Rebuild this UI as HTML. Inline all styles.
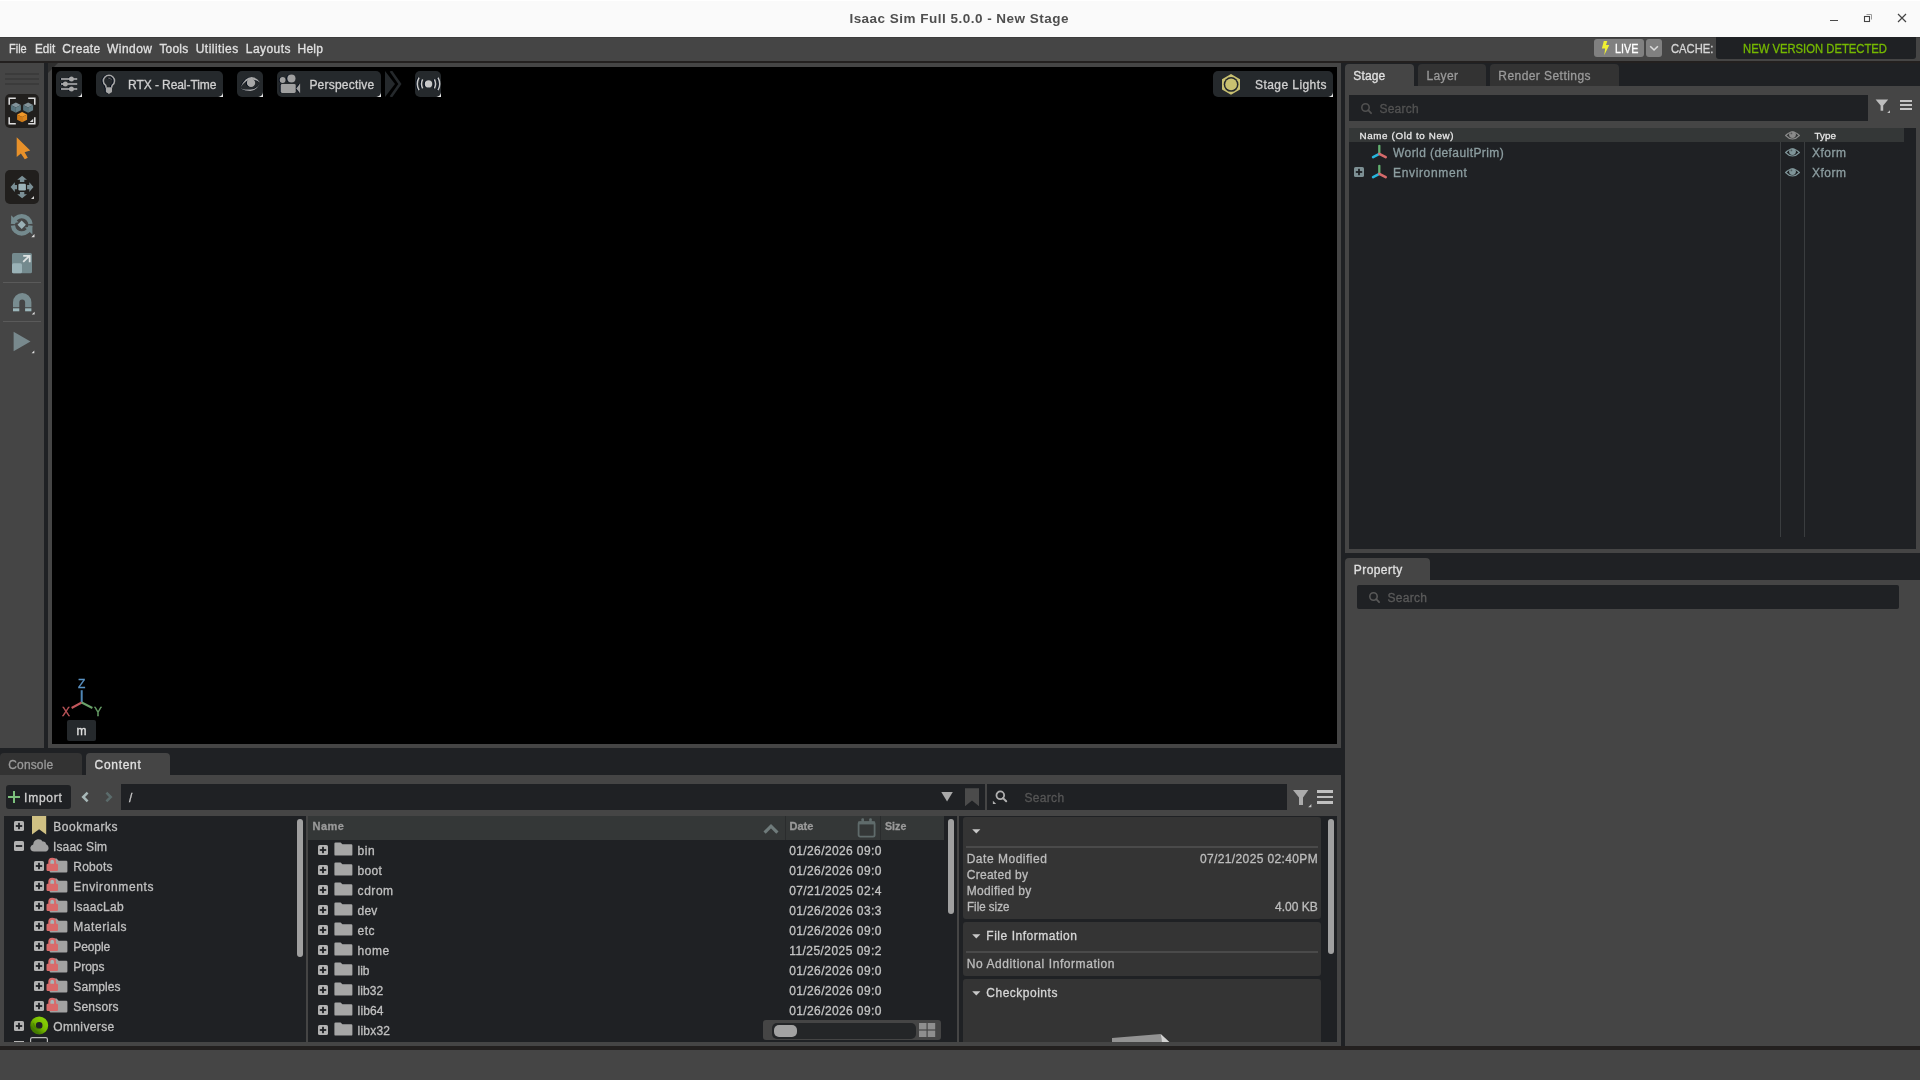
<!DOCTYPE html>
<html lang="en"><head><meta charset="utf-8"><title>Isaac Sim Full 5.0.0 - New Stage</title>
<style>
html,body{margin:0;padding:0}
body{width:1920px;height:1080px;overflow:hidden;position:relative;background:#454545;font-family:"Liberation Sans", sans-serif;}
.b{position:absolute;display:block}
.t{position:absolute;white-space:pre;line-height:1;display:block;-webkit-text-stroke:0.3px currentColor}
#root{position:absolute;left:0;top:0;width:1920px;height:1080px;will-change:transform;overflow:hidden}
</style></head>
<body>
<div id="root">
<div class="b" style="left:0px;top:0px;width:1920px;height:37px;background:#fafafa;"></div>
<div class="b" style="left:0px;top:0px;width:1920px;height:1px;background:#ffffff;"></div>
<span class="t" style="left:849.40px;top:12.37px;font-size:13.5px;color:#4f4f4f;letter-spacing:0.485px;font-weight:700;-webkit-text-stroke-width:0px;">Isaac Sim Full 5.0.0 - New Stage</span>
<div class="b" style="left:1830px;top:20px;width:8px;height:1px;background:#4a4a4a;"></div>
<svg class="b" style="left:1862px;top:12px;" width="12" height="12" viewBox="0 0 12 12"><path d="M4.5 2.5h5v5" fill="none" stroke="#9a9a9a" stroke-width="1"/><rect x="2.5" y="4.5" width="5" height="5" fill="none" stroke="#444" stroke-width="1.1"/></svg>
<svg class="b" style="left:1896px;top:12px;" width="12" height="12" viewBox="0 0 12 12"><path d="M2 2l8 8M10 2l-8 8" fill="none" stroke="#444" stroke-width="1.2"/></svg>
<div class="b" style="left:0px;top:37px;width:1920px;height:24px;background:#454545;"></div>
<div class="b" style="left:0px;top:37px;width:1920px;height:1px;background:#3b3b3b;"></div>
<div class="b" style="left:0px;top:61px;width:1920px;height:2px;background:#23201f;"></div>
<span class="t" style="left:9.40px;top:42.84px;font-size:12px;color:#e0e0e0;transform:scaleX(0.9155);transform-origin:0 0;">File</span>
<span class="t" style="left:34.50px;top:42.84px;font-size:12px;color:#e0e0e0;transform:scaleX(0.9745);transform-origin:0 0;">Edit</span>
<span class="t" style="left:62.30px;top:42.84px;font-size:12px;color:#e0e0e0;letter-spacing:0.351px;">Create</span>
<span class="t" style="left:107.10px;top:42.84px;font-size:12px;color:#e0e0e0;letter-spacing:0.437px;">Window</span>
<span class="t" style="left:159.40px;top:42.84px;font-size:12px;color:#e0e0e0;letter-spacing:0.197px;">Tools</span>
<span class="t" style="left:195.70px;top:42.84px;font-size:12px;color:#e0e0e0;letter-spacing:0.479px;">Utilities</span>
<span class="t" style="left:245.80px;top:42.84px;font-size:12px;color:#e0e0e0;letter-spacing:0.428px;">Layouts</span>
<span class="t" style="left:297.50px;top:42.84px;font-size:12px;color:#e0e0e0;letter-spacing:0.231px;">Help</span>
<div class="b" style="left:1594px;top:39px;width:50px;height:18px;background:#808080;border-radius:3px"></div>
<svg class="b" style="left:1600px;top:40px;" width="11" height="16" viewBox="0 0 11 16"><path d="M3.8 1H7.3L6 5H9.3L4.2 15.2L5.2 8.4H1.9Z" fill="#f0f032"/></svg>
<span class="t" style="left:1614.80px;top:42.84px;font-size:12px;color:#ffffff;transform:scaleX(0.8958);transform-origin:0 0;">LIVE</span>
<div class="b" style="left:1646px;top:39px;width:16px;height:18px;background:#808080;border-radius:3px"></div>
<svg class="b" style="left:1649px;top:44px;" width="10" height="8" viewBox="0 0 10 8"><path d="M1.2 2.2L5.05 6L8.9 2.2" fill="none" stroke="#dcdcdc" stroke-width="1.6"/></svg>
<span class="t" style="left:1670.70px;top:42.64px;font-size:12px;color:#d6d6d6;transform:scaleX(0.9354);transform-origin:0 0;">CACHE:</span>
<div class="b" style="left:1716px;top:37px;width:200px;height:22px;background:#1f2124;border-radius:0 0 3px 3px"></div>
<span class="t" style="left:1743.30px;top:42.64px;font-size:12px;color:#76b900;transform:scaleX(0.9390);transform-origin:0 0;">NEW VERSION DETECTED</span>
<div class="b" style="left:0px;top:63px;width:44px;height:685px;background:#454545;"></div>
<div class="b" style="left:44px;top:63px;width:4px;height:685px;background:#1f2124;"></div>
<div class="b" style="left:48px;top:63px;width:1293px;height:685px;background:#454545;"></div>
<div class="b" style="left:52px;top:67px;width:1285px;height:677px;background:#000;"></div>
<svg class="b" style="left:48px;top:63px;" width="10" height="10" viewBox="0 0 10 10"><path d="M0 0H10L0 10Z" fill="#2e2e2e"/></svg>
<div class="b" style="left:52px;top:67px;width:1285px;height:677px;background:#000;"></div>
<div class="b" style="left:1341px;top:63px;width:4px;height:983px;background:#1f2124;"></div>
<div class="b" style="left:0px;top:748px;width:1341px;height:5px;background:#1f2124;"></div>
<div class="b" style="left:0px;top:753px;width:1341px;height:22px;background:#1f2124;"></div>
<div class="b" style="left:0px;top:775px;width:1341px;height:271px;background:#454545;"></div>
<div class="b" style="left:0px;top:1046px;width:1920px;height:4px;background:#23201f;"></div>
<div class="b" style="left:0px;top:1050px;width:1920px;height:30px;background:#454545;"></div>
<div class="b" style="left:0px;top:753px;width:82px;height:22px;background:#333333;border-radius:4px 4px 0 0"></div>
<div class="b" style="left:86px;top:753px;width:84px;height:22px;background:#454545;border-radius:4px 4px 0 0"></div>
<span class="t" style="left:8.30px;top:758.84px;font-size:12px;color:#9a9a9a;letter-spacing:0.141px;">Console</span>
<span class="t" style="left:94.50px;top:758.84px;font-size:12px;color:#e0e0e0;letter-spacing:0.717px;">Content</span>
<div class="b" style="left:1345px;top:63px;width:575px;height:23px;background:#1f2124;"></div>
<div class="b" style="left:1345px;top:86px;width:575px;height:467px;background:#454545;"></div>
<div class="b" style="left:1345px;top:553px;width:575px;height:5px;background:#1f2124;"></div>
<div class="b" style="left:1345px;top:558px;width:575px;height:22px;background:#1f2124;"></div>
<div class="b" style="left:1345px;top:580px;width:575px;height:466px;background:#454545;"></div>
<div class="b" style="left:1345px;top:64px;width:69px;height:22px;background:#454545;border-radius:4px 4px 0 0"></div>
<div class="b" style="left:1418px;top:64px;width:68px;height:22px;background:#333333;border-radius:4px 4px 0 0"></div>
<div class="b" style="left:1490px;top:64px;width:129px;height:22px;background:#333333;border-radius:4px 4px 0 0"></div>
<span class="t" style="left:1353.30px;top:69.84px;font-size:12px;color:#e0e0e0;letter-spacing:0.154px;">Stage</span>
<span class="t" style="left:1426.40px;top:69.84px;font-size:12px;color:#9a9a9a;letter-spacing:0.395px;">Layer</span>
<span class="t" style="left:1498.30px;top:69.84px;font-size:12px;color:#9a9a9a;letter-spacing:0.439px;">Render Settings</span>
<div class="b" style="left:5px;top:73px;width:34px;height:2px;background:#3b3b3b;"></div>
<div class="b" style="left:5px;top:78px;width:34px;height:2px;background:#3b3b3b;"></div>
<div class="b" style="left:5px;top:83px;width:34px;height:2px;background:#3b3b3b;"></div>
<div class="b" style="left:5px;top:94px;width:34px;height:34px;background:#211f1d;border-radius:5px"></div>
<svg class="b" style="left:5px;top:94px;" width="34" height="34" viewBox="0 0 34 34"><path d="M4.2 10.8V4.2H10.8M23.2 4.2H29.8V10.8M29.8 23.2V29.8H23.2M10.8 29.8H4.2V23.2" fill="none" stroke="#dedede" stroke-width="1.5"/><path d="M10.9 8.399999999999999L15.9 11.0L10.9 13.6L5.9 11.0Z" fill="#82939a"/><path d="M5.9 11.0L10.9 13.6L10.9 18.8L5.9 16.2Z" fill="#58737c"/><path d="M15.9 11.0L10.9 13.6L10.9 18.8L15.9 16.2Z" fill="#637e86"/><path d="M23.1 8.399999999999999L28.1 11.0L23.1 13.6L18.1 11.0Z" fill="#82939a"/><path d="M18.1 11.0L23.1 13.6L23.1 18.8L18.1 16.2Z" fill="#58737c"/><path d="M28.1 11.0L23.1 13.6L23.1 18.8L28.1 16.2Z" fill="#637e86"/><path d="M17.1 17.900000000000002L22.1 20.5L17.1 23.1L12.100000000000001 20.5Z" fill="#f0982a"/><path d="M12.100000000000001 20.5L17.1 23.1L17.1 28.3L12.100000000000001 25.700000000000003Z" fill="#d07a16"/><path d="M22.1 20.5L17.1 23.1L17.1 28.3L22.1 25.700000000000003Z" fill="#dc861e"/><path d="M28.2 24.8V28H24.8Z" fill="#d8d8d8"/></svg>
<svg class="b" style="left:0px;top:132px;" width="44" height="34" viewBox="0 0 44 34"><path d="M16.7 5.2L16.7 25L20.9 21.6L24.8 27.2L27.8 25.7L24.6 20.2L30.2 18.6Z" fill="#e8912a"/></svg>
<div class="b" style="left:5px;top:170px;width:34px;height:34px;background:#211f1d;border-radius:5px"></div>
<svg class="b" style="left:5px;top:170px;" width="34" height="34" viewBox="0 0 34 34"><rect x="13.4" y="13.7" width="7.5" height="6.8" rx="1.2" fill="#9cb3b8"/><path d="M17.1 5.8L22 9.8H19.3V12H14.9V9.8H12.2Z" fill="#7b9096"/><path d="M17.1 28.2L22 24.3H19.3V22.1H14.9V24.3H12.2Z" fill="#7b9096"/><path d="M5.6 17.1L9.8 12.2V14.9H12V19.3H9.8V22Z" fill="#7b9096"/><path d="M28.5 17.1L24.3 12.2V14.9H22.1V19.3H24.3V22Z" fill="#7b9096"/><path d="M29 26V29H26Z" fill="#d8d8d8"/></svg>
<svg class="b" style="left:8px;top:210px;" width="28" height="30" viewBox="0 0 28 30"><path d="M22.5 14.0A8.85 8.85 0 0 0 4.9 14.0" fill="none" stroke="#748a8e" stroke-width="4.3"/><path d="M4.9 15.6A8.85 8.85 0 0 0 22.5 15.6" fill="none" stroke="#748a8e" stroke-width="4.3"/><path d="M3.1 5.2V13.4L10.6 12.2Z" fill="#748a8e"/><path d="M24.4 24.4V16.2L16.9 17.4Z" fill="#748a8e"/><path d="M13.7 10.6L17.9 14.8L13.7 19L9.5 14.8Z" fill="#9ab0b5"/><path d="M26.5 24V27.2H23.3Z" fill="#e0e0e0"/></svg>
<svg class="b" style="left:12px;top:252.7px;" width="20" height="21" viewBox="0 0 20 21"><rect x="0" y="0" width="20" height="20.3" rx="1.6" fill="#748a8e"/><rect x="0" y="10.3" width="10" height="10" rx="1.6" fill="#9ab2b7"/><path d="M11.2 8.8L17.4 2.8M11.2 2.9H17.7V9.2" fill="none" stroke="#dfe3e3" stroke-width="1.8"/></svg>
<div class="b" style="left:3px;top:282px;width:38px;height:1px;background:#5a5a5a;"></div>
<svg class="b" style="left:12.8px;top:292.7px;" width="22" height="22" viewBox="0 0 22 22"><path d="M0 14.3V9.2A9.2 9.2 0 0 1 18.4 9.2V14.3H12.1V9.3A2.9 2.9 0 0 0 6.3 9.3V14.3Z" fill="#788c90"/><rect x="0" y="15.3" width="6.3" height="3" fill="#9bb6ba"/><rect x="12.1" y="15.3" width="6.3" height="3" fill="#9bb6ba"/><path d="M21.6 18.8V21.6H18.8Z" fill="#e0e0e0"/></svg>
<div class="b" style="left:3px;top:321.2px;width:38px;height:1px;background:#5a5a5a;"></div>
<svg class="b" style="left:12px;top:330px;" width="24" height="24" viewBox="0 0 24 24"><path d="M1.6 1.8L18.5 11.5L1.6 21.2Z" fill="#78898d"/><path d="M22.3 20.6V23.3H19.6Z" fill="#e0e0e0"/></svg>
<svg class="b" style="left:76px;top:91px;" width="6" height="6" viewBox="0 0 6 6"><path d="M6 0.8V6H0.8Z" fill="#e6e6e6"/></svg>
<div class="b" style="left:56px;top:71px;width:26px;height:26px;background:#25292c;border-radius:5px"></div>
<svg class="b" style="left:56px;top:71px;filter:drop-shadow(-0.9px 0.8px 0 #020a18)" width="26" height="26" viewBox="0 0 26 26"><rect x="5" y="7.15" width="16.2" height="1.7" fill="#a8a8a8"/><circle cx="15.4" cy="8" r="2.5" fill="#a8a8a8"/><rect x="5" y="12.15" width="16.2" height="1.7" fill="#a8a8a8"/><circle cx="9.3" cy="13" r="2.5" fill="#a8a8a8"/><rect x="5" y="17.15" width="16.2" height="1.7" fill="#a8a8a8"/><circle cx="15.4" cy="18" r="2.5" fill="#a8a8a8"/></svg>
<svg class="b" style="left:217px;top:91px;" width="6" height="6" viewBox="0 0 6 6"><path d="M6 0.8V6H0.8Z" fill="#e6e6e6"/></svg>
<div class="b" style="left:96px;top:71px;width:127px;height:26px;background:#25292c;border-radius:5px"></div>
<svg class="b" style="left:96px;top:71px;filter:drop-shadow(-0.9px 0.8px 0 #020a18)" width="26" height="26" viewBox="0 0 26 26"><path d="M10.2 16.6L9.7 14.4Q7.3 12.7 7.3 9.9A5.6 5.6 0 0 1 18.5 9.9Q18.5 12.7 16.1 14.4L15.6 16.6" fill="none" stroke="#a8a8a8" stroke-width="1.55"/><path d="M9.8 16.2H16V20.4Q16 21.2 15.2 21.6L12.9 22.9L10.6 21.6Q9.8 21.2 9.8 20.4Z" fill="#a8a8a8"/><path d="M12.2 7.2Q14.4 6.9 15.4 8.8" fill="none" stroke="#777" stroke-width="0.9"/></svg>
<span class="t" style="left:128.10px;top:78.84px;font-size:12px;color:#d0d0d0;letter-spacing:-0.076px;">RTX - Real-Time</span>
<svg class="b" style="left:257px;top:91px;" width="6" height="6" viewBox="0 0 6 6"><path d="M6 0.8V6H0.8Z" fill="#e6e6e6"/></svg>
<div class="b" style="left:237px;top:71px;width:26px;height:26px;background:#25292c;border-radius:5px"></div>
<svg class="b" style="left:237px;top:71px;filter:drop-shadow(-0.9px 0.8px 0 #020a18)" width="26" height="26" viewBox="0 0 26 26"><path d="M3.8 16Q8 6.2 14.6 6Q19.6 6.2 23 11.6Q18.8 8.6 14.4 8.6Q8.8 8.8 3.8 16Z" fill="#a8a8a8"/><path d="M3.2 17.4Q8.4 19.9 13.4 19.9Q19.4 19.3 22.6 13.2Q19.6 18.3 13.4 18.6Q8.4 18.7 3.2 17.4Z" fill="#a8a8a8"/><circle cx="14" cy="11.9" r="4.2" fill="#a8a8a8"/></svg>
<svg class="b" style="left:375px;top:91px;" width="6" height="6" viewBox="0 0 6 6"><path d="M6 0.8V6H0.8Z" fill="#e6e6e6"/></svg>
<div class="b" style="left:277px;top:71px;width:104px;height:26px;background:#25292c;border-radius:5px"></div>
<svg class="b" style="left:277px;top:71px;filter:drop-shadow(-0.9px 0.8px 0 #020a18)" width="26" height="26" viewBox="0 0 26 26"><circle cx="5.6" cy="9" r="2.9" fill="#a0a0a0"/><circle cx="14.4" cy="7.5" r="4.1" fill="#a0a0a0"/><rect x="3.7" y="13" width="15" height="9" rx="1.4" fill="#a0a0a0"/><path d="M19.2 17.5L23.1 12.6V22.2Z" fill="#a0a0a0"/></svg>
<span class="t" style="left:309.40px;top:78.84px;font-size:12px;color:#d0d0d0;letter-spacing:0.218px;">Perspective</span>
<svg class="b" style="left:385px;top:71px;" width="17" height="26" viewBox="0 0 17 26"><path d="M0 0L10 13L0 26Z" fill="#25292c"/><path d="M5.8 0L14.9 13L5.8 26" fill="none" stroke="#25292c" stroke-width="2.6"/></svg>
<svg class="b" style="left:435px;top:91px;" width="6" height="6" viewBox="0 0 6 6"><path d="M6 0.8V6H0.8Z" fill="#e6e6e6"/></svg>
<div class="b" style="left:415px;top:71px;width:26px;height:26px;background:#25292c;border-radius:5px"></div>
<svg class="b" style="left:415px;top:71px;filter:drop-shadow(-0.9px 0.8px 0 #020a18)" width="27" height="26" viewBox="0 0 27 26"><circle cx="13.5" cy="12.9" r="3.7" fill="#c8c8c8"/><path d="M7.6 8.4Q5.4 12.9 7.6 17.4M19.4 8.4Q21.6 12.9 19.4 17.4" fill="none" stroke="#c8c8c8" stroke-width="1.5"/><path d="M4 6.6Q0.6 12.9 4 19.2M23 6.6Q26.4 12.9 23 19.2" fill="none" stroke="#c8c8c8" stroke-width="1.5"/></svg>
<svg class="b" style="left:1327px;top:91px;" width="6" height="6" viewBox="0 0 6 6"><path d="M6 0.8V6H0.8Z" fill="#e6e6e6"/></svg>
<div class="b" style="left:1213px;top:71px;width:120px;height:26px;background:#25292c;border-radius:5px"></div>
<svg class="b" style="left:1222.3px;top:73.5px;" width="18" height="21" viewBox="0 0 18 21"><path d="M9 0L18 5.2V15.6L9 20.8L0 15.6V5.2Z" fill="#c9c171"/><circle cx="9.1" cy="10.4" r="7.4" fill="#25292c"/><circle cx="9.1" cy="10.4" r="5.9" fill="#c9c171"/></svg>
<span class="t" style="left:1255.00px;top:78.64px;font-size:12px;color:#d0d0d0;letter-spacing:0.435px;">Stage Lights</span>
<svg class="b" style="left:61px;top:672px;" width="44" height="48" viewBox="0 0 44 48"><path d="M20.7 30.5V18.2" stroke="#4f86b5" stroke-width="2"/><path d="M20.7 30.5L10.6 36" stroke="#c2575c" stroke-width="2"/><path d="M20.7 30.5L31.4 36" stroke="#6aa36a" stroke-width="2"/></svg>
<span class="t" style="left:78.00px;top:678.04px;font-size:12px;color:#5b93c4;">Z</span>
<span class="t" style="left:62.00px;top:706.04px;font-size:12px;color:#c2575c;">X</span>
<span class="t" style="left:94.00px;top:706.04px;font-size:12px;color:#6aa36a;">Y</span>
<div class="b" style="left:67px;top:719.5px;width:29px;height:21px;background:#25292c;border-radius:2px"></div>
<span class="t" style="left:76.50px;top:725.04px;font-size:12px;color:#e0e0e0;">m</span>
<div class="b" style="left:1349px;top:95px;width:519px;height:26px;background:#1f2124;"></div>
<svg class="b" style="left:1360.6px;top:102.7px;" width="13" height="13" viewBox="0 0 13 13"><circle cx="4.5" cy="4.5" r="3.7" fill="none" stroke="#505050" stroke-width="1.6"/><path d="M7.2 7.2L10.1 10.2" stroke="#505050" stroke-width="1.8" stroke-linecap="round"/></svg>
<span class="t" style="left:1379.40px;top:102.84px;font-size:12px;color:#525252;letter-spacing:0.270px;">Search</span>
<svg class="b" style="left:1875px;top:99px;" width="16" height="15" viewBox="0 0 16 15"><path d="M0.6 0.4H13.2L8.2 6.4V11.8H5.6V6.4Z" fill="#bdbdbd"/><path d="M15 11.2V14H12.2Z" fill="#bdbdbd"/></svg>
<div class="b" style="left:1900px;top:100px;width:12px;height:2px;background:#c4c4c4;"></div>
<div class="b" style="left:1900px;top:104px;width:12px;height:2px;background:#c4c4c4;"></div>
<div class="b" style="left:1900px;top:108px;width:12px;height:2px;background:#c4c4c4;"></div>
<div class="b" style="left:1349px;top:128px;width:567px;height:421px;background:#1f2124;"></div>
<div class="b" style="left:1349px;top:128px;width:555px;height:14px;background:#343737;"></div>
<span class="t" style="left:1359.50px;top:130.70px;font-size:9.8px;color:#e6e6e6;letter-spacing:0.639px;">Name (Old to New)</span>
<span class="t" style="left:1814.60px;top:130.70px;font-size:9.8px;color:#e6e6e6;">Type</span>
<svg class="b" style="left:1784.5px;top:129.5px;" width="15" height="11" viewBox="0 0 15 11"><path d="M0.6 5.5Q7.5 -1.6 14.4 5.5Q7.5 12.6 0.6 5.5Z" fill="none" stroke="#8a8a8a" stroke-width="1.1"/><circle cx="7.5" cy="4.6" r="3.4" fill="#8a8a8a"/><circle cx="6.4" cy="3.4" r="0.9" fill="#1f2124" opacity="0.5"/></svg>
<div class="b" style="left:1780px;top:142px;width:1px;height:395px;background:#3a3d3f;"></div>
<div class="b" style="left:1804px;top:142px;width:1px;height:395px;background:#3a3d3f;"></div>
<svg class="b" style="left:1370.6px;top:144.4px;" width="17" height="16" viewBox="0 0 17 16"><path d="M8.3 9.8V1.8" stroke="#62b06f" stroke-width="2.3" stroke-linecap="round"/><path d="M8.3 9.8L2.1 13.1" stroke="#27b4da" stroke-width="2.6" stroke-linecap="round"/><path d="M8.3 9.8L14.7 13.1" stroke="#d66b6b" stroke-width="2.6" stroke-linecap="round"/></svg>
<svg class="b" style="left:1370.6px;top:164.4px;" width="17" height="16" viewBox="0 0 17 16"><path d="M8.3 9.8V1.8" stroke="#62b06f" stroke-width="2.3" stroke-linecap="round"/><path d="M8.3 9.8L2.1 13.1" stroke="#27b4da" stroke-width="2.6" stroke-linecap="round"/><path d="M8.3 9.8L14.7 13.1" stroke="#d66b6b" stroke-width="2.6" stroke-linecap="round"/></svg>
<span class="t" style="left:1393.00px;top:146.84px;font-size:12px;color:#8d9ea1;letter-spacing:0.423px;">World (defaultPrim)</span>
<span class="t" style="left:1393.00px;top:166.84px;font-size:12px;color:#8d9ea1;letter-spacing:0.657px;">Environment</span>
<svg class="b" style="left:1354px;top:167px;" width="10" height="10" viewBox="0 0 10 10"><rect x="0" y="0" width="10" height="10" rx="1.6" fill="#7d9094"/><rect x="1.8" y="4.1" width="6.4" height="1.8" fill="#1f2124"/><rect x="4.1" y="1.8" width="1.8" height="6.4" fill="#1f2124"/></svg>
<svg class="b" style="left:1784.5px;top:146.5px;" width="15" height="11" viewBox="0 0 15 11"><path d="M0.6 5.5Q7.5 -1.6 14.4 5.5Q7.5 12.6 0.6 5.5Z" fill="none" stroke="#7f9599" stroke-width="1.1"/><circle cx="7.5" cy="4.6" r="3.4" fill="#7f9599"/><circle cx="6.4" cy="3.4" r="0.9" fill="#1f2124" opacity="0.5"/></svg>
<svg class="b" style="left:1784.5px;top:166.5px;" width="15" height="11" viewBox="0 0 15 11"><path d="M0.6 5.5Q7.5 -1.6 14.4 5.5Q7.5 12.6 0.6 5.5Z" fill="none" stroke="#7f9599" stroke-width="1.1"/><circle cx="7.5" cy="4.6" r="3.4" fill="#7f9599"/><circle cx="6.4" cy="3.4" r="0.9" fill="#1f2124" opacity="0.5"/></svg>
<span class="t" style="left:1812.00px;top:146.84px;font-size:12px;color:#8d9ea1;letter-spacing:0.498px;">Xform</span>
<span class="t" style="left:1812.00px;top:166.84px;font-size:12px;color:#8d9ea1;letter-spacing:0.498px;">Xform</span>
<div class="b" style="left:1345px;top:558px;width:85px;height:22px;background:#454545;border-radius:4px 4px 0 0"></div>
<span class="t" style="left:1353.75px;top:563.84px;font-size:12px;color:#e0e0e0;letter-spacing:0.443px;">Property</span>
<div class="b" style="left:1357px;top:585px;width:542px;height:24px;background:#1f2124;border-radius:2px"></div>
<svg class="b" style="left:1368.7px;top:592.1px;" width="13" height="13" viewBox="0 0 13 13"><circle cx="4.5" cy="4.5" r="3.7" fill="none" stroke="#585858" stroke-width="1.6"/><path d="M7.2 7.2L10.1 10.2" stroke="#585858" stroke-width="1.8" stroke-linecap="round"/></svg>
<span class="t" style="left:1387.50px;top:591.84px;font-size:12px;color:#5a5a5a;letter-spacing:0.280px;">Search</span>
<div class="b" style="left:6px;top:785px;width:65px;height:24px;background:#1f2124;border-radius:3px"></div>
<svg class="b" style="left:8px;top:791px;" width="12" height="12" viewBox="0 0 12 12"><path d="M6 0V12M0 6H12" stroke="#7cc07c" stroke-width="2"/></svg>
<span class="t" style="left:24.10px;top:792.14px;font-size:12px;color:#d0d0d0;letter-spacing:0.745px;">Import</span>
<svg class="b" style="left:80px;top:790px;" width="10" height="14" viewBox="0 0 10 14"><path d="M7.6 2.6L3.2 7L7.6 11.4" fill="none" stroke="#a9b9b9" stroke-width="2.5"/></svg>
<svg class="b" style="left:104px;top:790px;" width="10" height="14" viewBox="0 0 10 14"><path d="M2.4 2.6L6.8 7L2.4 11.4" fill="none" stroke="#5b6b6b" stroke-width="2.5"/></svg>
<div class="b" style="left:121px;top:784px;width:864px;height:26px;background:#1f2124;"></div>
<span class="t" style="left:129.00px;top:792.14px;font-size:12px;color:#c8c8c8;">/</span>
<svg class="b" style="left:941px;top:791px;" width="12" height="11" viewBox="0 0 12 11"><path d="M0.3 1H11.8L6.05 10.4Z" fill="#a8a8a8"/></svg>
<svg class="b" style="left:965px;top:788px;" width="15" height="19" viewBox="0 0 15 19"><path d="M0 0.2H14V18.2L7 12.6L0 18.2Z" fill="#4b4b4b"/></svg>
<div class="b" style="left:987px;top:784px;width:300px;height:26px;background:#1f2124;"></div>
<svg class="b" style="left:992px;top:790px;" width="16" height="16" viewBox="0 0 16 16"><circle cx="8.3" cy="5.3" r="3.85" fill="none" stroke="#b0b0b0" stroke-width="1.8"/><path d="M11 8.1L14.2 11.3" stroke="#b0b0b0" stroke-width="2" stroke-linecap="round"/><path d="M0.9 10.8V13.9H4.2Z" fill="#b0b0b0"/></svg>
<span class="t" style="left:1024.40px;top:791.84px;font-size:12px;color:#565656;letter-spacing:0.330px;">Search</span>
<svg class="b" style="left:1292px;top:789px;" width="20" height="19" viewBox="0 0 20 19"><path d="M1 1H16.4L11 8.6V16H7V8.6Z" fill="#ababab"/><path d="M19.4 15V18.2H16.2Z" fill="#c4c4c4"/></svg>
<div class="b" style="left:1317px;top:790px;width:16px;height:3px;background:#c0c0c0;"></div>
<div class="b" style="left:1317px;top:796px;width:16px;height:2px;background:#c0c0c0;"></div>
<div class="b" style="left:1317px;top:801px;width:16px;height:3px;background:#c0c0c0;"></div>
<div class="b" style="left:4px;top:816px;width:302px;height:226px;background:#1f2124;"></div>
<div class="b" style="left:297px;top:819px;width:6px;height:138px;background:#a0a0a0;border-radius:3px"></div>
<svg class="b" style="left:14px;top:821px;" width="10" height="10" viewBox="0 0 10 10"><rect x="0" y="0" width="10" height="10" rx="1.6" fill="#b2b2b2"/><rect x="1.8" y="4.1" width="6.4" height="1.8" fill="#1f2124"/><rect x="4.1" y="1.8" width="1.8" height="6.4" fill="#1f2124"/></svg>
<svg class="b" style="left:32px;top:816px;" width="15" height="19" viewBox="0 0 15 19"><path d="M0 0H14.2V18.4L7.1 13.2L0 18.4Z" fill="#cfc083"/></svg>
<span class="t" style="left:53.30px;top:820.54px;font-size:12px;color:#c0c0c0;letter-spacing:0.523px;">Bookmarks</span>
<svg class="b" style="left:14px;top:841px;" width="10" height="10" viewBox="0 0 10 10"><rect x="0" y="0" width="10" height="10" rx="1.6" fill="#b2b2b2"/><rect x="1.8" y="4.1" width="6.4" height="1.8" fill="#1f2124"/></svg>
<svg class="b" style="left:29.6px;top:838.6px;" width="19" height="13" viewBox="0 0 19 13"><path d="M4.2 12.6Q0.3 12.4 0.3 8.8Q0.5 6 3.2 5.4Q3.6 1.4 7.6 0.3Q11.2 -0.2 12.6 2.6Q15.6 1.8 16.2 5.2Q18.7 6.4 18.6 9.2Q18.2 12.6 14.6 12.6Z" fill="#a0a0a0"/></svg>
<span class="t" style="left:52.90px;top:840.54px;font-size:12px;color:#c0c0c0;letter-spacing:0.177px;">Isaac Sim</span>
<svg class="b" style="left:34px;top:861px;" width="10" height="10" viewBox="0 0 10 10"><rect x="0" y="0" width="10" height="10" rx="1.6" fill="#b2b2b2"/><rect x="1.8" y="4.1" width="6.4" height="1.8" fill="#1f2124"/><rect x="4.1" y="1.8" width="1.8" height="6.4" fill="#1f2124"/></svg>
<svg class="b" style="left:46.25px;top:856.6px;" width="22" height="16" viewBox="0 0 22 16"><path d="M3.6 2.8Q3.6 1.6 4.8 1.6H10.6L12.6 3.7H20.2Q21.4 3.7 21.4 4.9V14.3Q21.4 15.5 20.2 15.5H4.8Q3.6 15.5 3.6 14.3Z" fill="#a2a2a2"/><path d="M4.3 7V4.7A1.9 1.9 0 0 1 8.1 4.7V7Z" fill="#a9b4b6"/><path d="M3.3 7.2V4.7A2.9 2.9 0 0 1 9.1 4.7V7.2" fill="none" stroke="#d96a6a" stroke-width="2"/><rect x="0.5" y="6.8" width="11.5" height="7.2" rx="1.2" fill="#d96a6a"/></svg>
<span class="t" style="left:73.30px;top:860.54px;font-size:12px;color:#c0c0c0;letter-spacing:0.236px;">Robots</span>
<svg class="b" style="left:34px;top:881px;" width="10" height="10" viewBox="0 0 10 10"><rect x="0" y="0" width="10" height="10" rx="1.6" fill="#b2b2b2"/><rect x="1.8" y="4.1" width="6.4" height="1.8" fill="#1f2124"/><rect x="4.1" y="1.8" width="1.8" height="6.4" fill="#1f2124"/></svg>
<svg class="b" style="left:46.25px;top:876.6px;" width="22" height="16" viewBox="0 0 22 16"><path d="M3.6 2.8Q3.6 1.6 4.8 1.6H10.6L12.6 3.7H20.2Q21.4 3.7 21.4 4.9V14.3Q21.4 15.5 20.2 15.5H4.8Q3.6 15.5 3.6 14.3Z" fill="#a2a2a2"/><path d="M4.3 7V4.7A1.9 1.9 0 0 1 8.1 4.7V7Z" fill="#a9b4b6"/><path d="M3.3 7.2V4.7A2.9 2.9 0 0 1 9.1 4.7V7.2" fill="none" stroke="#d96a6a" stroke-width="2"/><rect x="0.5" y="6.8" width="11.5" height="7.2" rx="1.2" fill="#d96a6a"/></svg>
<span class="t" style="left:73.30px;top:880.54px;font-size:12px;color:#c0c0c0;letter-spacing:0.621px;">Environments</span>
<svg class="b" style="left:34px;top:901px;" width="10" height="10" viewBox="0 0 10 10"><rect x="0" y="0" width="10" height="10" rx="1.6" fill="#b2b2b2"/><rect x="1.8" y="4.1" width="6.4" height="1.8" fill="#1f2124"/><rect x="4.1" y="1.8" width="1.8" height="6.4" fill="#1f2124"/></svg>
<svg class="b" style="left:46.25px;top:896.6px;" width="22" height="16" viewBox="0 0 22 16"><path d="M3.6 2.8Q3.6 1.6 4.8 1.6H10.6L12.6 3.7H20.2Q21.4 3.7 21.4 4.9V14.3Q21.4 15.5 20.2 15.5H4.8Q3.6 15.5 3.6 14.3Z" fill="#a2a2a2"/><path d="M4.3 7V4.7A1.9 1.9 0 0 1 8.1 4.7V7Z" fill="#a9b4b6"/><path d="M3.3 7.2V4.7A2.9 2.9 0 0 1 9.1 4.7V7.2" fill="none" stroke="#d96a6a" stroke-width="2"/><rect x="0.5" y="6.8" width="11.5" height="7.2" rx="1.2" fill="#d96a6a"/></svg>
<span class="t" style="left:72.90px;top:900.54px;font-size:12px;color:#c0c0c0;letter-spacing:0.296px;">IsaacLab</span>
<svg class="b" style="left:34px;top:921px;" width="10" height="10" viewBox="0 0 10 10"><rect x="0" y="0" width="10" height="10" rx="1.6" fill="#b2b2b2"/><rect x="1.8" y="4.1" width="6.4" height="1.8" fill="#1f2124"/><rect x="4.1" y="1.8" width="1.8" height="6.4" fill="#1f2124"/></svg>
<svg class="b" style="left:46.25px;top:916.6px;" width="22" height="16" viewBox="0 0 22 16"><path d="M3.6 2.8Q3.6 1.6 4.8 1.6H10.6L12.6 3.7H20.2Q21.4 3.7 21.4 4.9V14.3Q21.4 15.5 20.2 15.5H4.8Q3.6 15.5 3.6 14.3Z" fill="#a2a2a2"/><path d="M4.3 7V4.7A1.9 1.9 0 0 1 8.1 4.7V7Z" fill="#a9b4b6"/><path d="M3.3 7.2V4.7A2.9 2.9 0 0 1 9.1 4.7V7.2" fill="none" stroke="#d96a6a" stroke-width="2"/><rect x="0.5" y="6.8" width="11.5" height="7.2" rx="1.2" fill="#d96a6a"/></svg>
<span class="t" style="left:73.30px;top:920.54px;font-size:12px;color:#c0c0c0;letter-spacing:0.565px;">Materials</span>
<svg class="b" style="left:34px;top:941px;" width="10" height="10" viewBox="0 0 10 10"><rect x="0" y="0" width="10" height="10" rx="1.6" fill="#b2b2b2"/><rect x="1.8" y="4.1" width="6.4" height="1.8" fill="#1f2124"/><rect x="4.1" y="1.8" width="1.8" height="6.4" fill="#1f2124"/></svg>
<svg class="b" style="left:46.25px;top:936.6px;" width="22" height="16" viewBox="0 0 22 16"><path d="M3.6 2.8Q3.6 1.6 4.8 1.6H10.6L12.6 3.7H20.2Q21.4 3.7 21.4 4.9V14.3Q21.4 15.5 20.2 15.5H4.8Q3.6 15.5 3.6 14.3Z" fill="#a2a2a2"/><path d="M4.3 7V4.7A1.9 1.9 0 0 1 8.1 4.7V7Z" fill="#a9b4b6"/><path d="M3.3 7.2V4.7A2.9 2.9 0 0 1 9.1 4.7V7.2" fill="none" stroke="#d96a6a" stroke-width="2"/><rect x="0.5" y="6.8" width="11.5" height="7.2" rx="1.2" fill="#d96a6a"/></svg>
<span class="t" style="left:73.30px;top:940.54px;font-size:12px;color:#c0c0c0;letter-spacing:-0.098px;">People</span>
<svg class="b" style="left:34px;top:961px;" width="10" height="10" viewBox="0 0 10 10"><rect x="0" y="0" width="10" height="10" rx="1.6" fill="#b2b2b2"/><rect x="1.8" y="4.1" width="6.4" height="1.8" fill="#1f2124"/><rect x="4.1" y="1.8" width="1.8" height="6.4" fill="#1f2124"/></svg>
<svg class="b" style="left:46.25px;top:956.6px;" width="22" height="16" viewBox="0 0 22 16"><path d="M3.6 2.8Q3.6 1.6 4.8 1.6H10.6L12.6 3.7H20.2Q21.4 3.7 21.4 4.9V14.3Q21.4 15.5 20.2 15.5H4.8Q3.6 15.5 3.6 14.3Z" fill="#a2a2a2"/><path d="M4.3 7V4.7A1.9 1.9 0 0 1 8.1 4.7V7Z" fill="#a9b4b6"/><path d="M3.3 7.2V4.7A2.9 2.9 0 0 1 9.1 4.7V7.2" fill="none" stroke="#d96a6a" stroke-width="2"/><rect x="0.5" y="6.8" width="11.5" height="7.2" rx="1.2" fill="#d96a6a"/></svg>
<span class="t" style="left:73.30px;top:960.54px;font-size:12px;color:#c0c0c0;letter-spacing:-0.037px;">Props</span>
<svg class="b" style="left:34px;top:981px;" width="10" height="10" viewBox="0 0 10 10"><rect x="0" y="0" width="10" height="10" rx="1.6" fill="#b2b2b2"/><rect x="1.8" y="4.1" width="6.4" height="1.8" fill="#1f2124"/><rect x="4.1" y="1.8" width="1.8" height="6.4" fill="#1f2124"/></svg>
<svg class="b" style="left:46.25px;top:976.6px;" width="22" height="16" viewBox="0 0 22 16"><path d="M3.6 2.8Q3.6 1.6 4.8 1.6H10.6L12.6 3.7H20.2Q21.4 3.7 21.4 4.9V14.3Q21.4 15.5 20.2 15.5H4.8Q3.6 15.5 3.6 14.3Z" fill="#a2a2a2"/><path d="M4.3 7V4.7A1.9 1.9 0 0 1 8.1 4.7V7Z" fill="#a9b4b6"/><path d="M3.3 7.2V4.7A2.9 2.9 0 0 1 9.1 4.7V7.2" fill="none" stroke="#d96a6a" stroke-width="2"/><rect x="0.5" y="6.8" width="11.5" height="7.2" rx="1.2" fill="#d96a6a"/></svg>
<span class="t" style="left:73.30px;top:980.54px;font-size:12px;color:#c0c0c0;letter-spacing:0.085px;">Samples</span>
<svg class="b" style="left:34px;top:1001px;" width="10" height="10" viewBox="0 0 10 10"><rect x="0" y="0" width="10" height="10" rx="1.6" fill="#b2b2b2"/><rect x="1.8" y="4.1" width="6.4" height="1.8" fill="#1f2124"/><rect x="4.1" y="1.8" width="1.8" height="6.4" fill="#1f2124"/></svg>
<svg class="b" style="left:46.25px;top:996.6px;" width="22" height="16" viewBox="0 0 22 16"><path d="M3.6 2.8Q3.6 1.6 4.8 1.6H10.6L12.6 3.7H20.2Q21.4 3.7 21.4 4.9V14.3Q21.4 15.5 20.2 15.5H4.8Q3.6 15.5 3.6 14.3Z" fill="#a2a2a2"/><path d="M4.3 7V4.7A1.9 1.9 0 0 1 8.1 4.7V7Z" fill="#a9b4b6"/><path d="M3.3 7.2V4.7A2.9 2.9 0 0 1 9.1 4.7V7.2" fill="none" stroke="#d96a6a" stroke-width="2"/><rect x="0.5" y="6.8" width="11.5" height="7.2" rx="1.2" fill="#d96a6a"/></svg>
<span class="t" style="left:73.30px;top:1000.54px;font-size:12px;color:#c0c0c0;letter-spacing:0.196px;">Sensors</span>
<svg class="b" style="left:14px;top:1021px;" width="10" height="10" viewBox="0 0 10 10"><rect x="0" y="0" width="10" height="10" rx="1.6" fill="#b2b2b2"/><rect x="1.8" y="4.1" width="6.4" height="1.8" fill="#1f2124"/><rect x="4.1" y="1.8" width="1.8" height="6.4" fill="#1f2124"/></svg>
<svg class="b" style="left:30px;top:1016px;" width="19" height="19" viewBox="0 0 19 19"><defs><linearGradient id="omg" x1="0.85" y1="0.1" x2="0.15" y2="0.9"><stop offset="0" stop-color="#84cc06"/><stop offset="0.5" stop-color="#76b900"/><stop offset="1" stop-color="#447c00"/></linearGradient></defs><circle cx="9.2" cy="9.4" r="6.15" fill="none" stroke="url(#omg)" stroke-width="5.7"/><path d="M3.4 7.2Q4.4 13.4 10.6 12.6" fill="none" stroke="#3f7400" stroke-width="1.2" opacity="0.55"/></svg>
<span class="t" style="left:53.30px;top:1020.54px;font-size:12px;color:#c0c0c0;letter-spacing:0.358px;">Omniverse</span>
<div class="b" style="left:14px;top:1041px;width:10px;height:1px;background:#b2b2b2;"></div>
<svg class="b" style="left:30px;top:1036.5px;" width="18" height="5.5" viewBox="0 0 18 5.5"><rect x="0.6" y="0.6" width="16.8" height="10" rx="1.6" fill="none" stroke="#b8b8b8" stroke-width="1.2"/></svg>
<div class="b" style="left:308px;top:816px;width:649px;height:226px;background:#1f2124;"></div>
<div class="b" style="left:308px;top:816px;width:636px;height:24px;background:#343737;"></div>
<div class="b" style="left:785px;top:816px;width:1px;height:24px;background:#2a2c2d;"></div>
<div class="b" style="left:880px;top:816px;width:1px;height:24px;background:#2a2c2d;"></div>
<span class="t" style="left:312.50px;top:820.69px;font-size:11px;color:#9a9a9a;letter-spacing:0.486px;font-weight:700;">Name</span>
<span class="t" style="left:789.50px;top:820.69px;font-size:11px;color:#9a9a9a;letter-spacing:0.025px;font-weight:700;">Date</span>
<span class="t" style="left:885.00px;top:820.69px;font-size:11px;color:#9a9a9a;transform:scaleX(0.9683);transform-origin:0 0;font-weight:700;">Size</span>
<svg class="b" style="left:763px;top:823px;" width="16" height="11" viewBox="0 0 16 11"><path d="M1.6 9.6L8 3.2L14.4 9.6" fill="none" stroke="#6f7b7b" stroke-width="3.2"/></svg>
<svg class="b" style="left:857px;top:818px;" width="19" height="20" viewBox="0 0 19 20"><rect x="1.6" y="4.2" width="16" height="14.4" rx="1.6" fill="none" stroke="#5f6b6b" stroke-width="1.8"/><rect x="1.2" y="3.4" width="16.8" height="3" fill="#5f6b6b"/><rect x="4.4" y="0.3" width="2.6" height="5" rx="1" fill="#5f6b6b"/><rect x="12.2" y="0.3" width="2.6" height="5" rx="1" fill="#5f6b6b"/></svg>
<div class="b" style="left:948px;top:819px;width:6px;height:95px;background:#a0a0a0;border-radius:3px"></div>
<svg class="b" style="left:318px;top:845px;" width="10" height="10" viewBox="0 0 10 10"><rect x="0" y="0" width="10" height="10" rx="1.6" fill="#b2b2b2"/><rect x="1.8" y="4.1" width="6.4" height="1.8" fill="#1f2124"/><rect x="4.1" y="1.8" width="1.8" height="6.4" fill="#1f2124"/></svg>
<svg class="b" style="left:333.6px;top:842px;" width="19" height="14" viewBox="0 0 19 14"><path d="M0.4 1.6Q0.4 0.4 1.6 0.4H6.6L8.4 2.2H17.2Q18.4 2.2 18.4 3.4V12.4Q18.4 13.6 17.2 13.6H1.6Q0.4 13.6 0.4 12.4Z" fill="#a6a6a6"/></svg>
<span class="t" style="left:357.60px;top:844.54px;font-size:12px;color:#c0c0c0;letter-spacing:0.480px;">bin</span>
<span class="t" style="left:789.20px;top:844.54px;font-size:12px;color:#c4c4c4;letter-spacing:0.388px;">01/26/2026 09:0</span>
<svg class="b" style="left:318px;top:865px;" width="10" height="10" viewBox="0 0 10 10"><rect x="0" y="0" width="10" height="10" rx="1.6" fill="#b2b2b2"/><rect x="1.8" y="4.1" width="6.4" height="1.8" fill="#1f2124"/><rect x="4.1" y="1.8" width="1.8" height="6.4" fill="#1f2124"/></svg>
<svg class="b" style="left:333.6px;top:862px;" width="19" height="14" viewBox="0 0 19 14"><path d="M0.4 1.6Q0.4 0.4 1.6 0.4H6.6L8.4 2.2H17.2Q18.4 2.2 18.4 3.4V12.4Q18.4 13.6 17.2 13.6H1.6Q0.4 13.6 0.4 12.4Z" fill="#a6a6a6"/></svg>
<span class="t" style="left:357.60px;top:864.54px;font-size:12px;color:#c0c0c0;letter-spacing:0.293px;">boot</span>
<span class="t" style="left:789.20px;top:864.54px;font-size:12px;color:#c4c4c4;letter-spacing:0.388px;">01/26/2026 09:0</span>
<svg class="b" style="left:318px;top:885px;" width="10" height="10" viewBox="0 0 10 10"><rect x="0" y="0" width="10" height="10" rx="1.6" fill="#b2b2b2"/><rect x="1.8" y="4.1" width="6.4" height="1.8" fill="#1f2124"/><rect x="4.1" y="1.8" width="1.8" height="6.4" fill="#1f2124"/></svg>
<svg class="b" style="left:333.6px;top:882px;" width="19" height="14" viewBox="0 0 19 14"><path d="M0.4 1.6Q0.4 0.4 1.6 0.4H6.6L8.4 2.2H17.2Q18.4 2.2 18.4 3.4V12.4Q18.4 13.6 17.2 13.6H1.6Q0.4 13.6 0.4 12.4Z" fill="#a6a6a6"/></svg>
<span class="t" style="left:357.60px;top:884.54px;font-size:12px;color:#c0c0c0;letter-spacing:0.539px;">cdrom</span>
<span class="t" style="left:789.20px;top:884.54px;font-size:12px;color:#c4c4c4;letter-spacing:0.388px;">07/21/2025 02:4</span>
<svg class="b" style="left:318px;top:905px;" width="10" height="10" viewBox="0 0 10 10"><rect x="0" y="0" width="10" height="10" rx="1.6" fill="#b2b2b2"/><rect x="1.8" y="4.1" width="6.4" height="1.8" fill="#1f2124"/><rect x="4.1" y="1.8" width="1.8" height="6.4" fill="#1f2124"/></svg>
<svg class="b" style="left:333.6px;top:902px;" width="19" height="14" viewBox="0 0 19 14"><path d="M0.4 1.6Q0.4 0.4 1.6 0.4H6.6L8.4 2.2H17.2Q18.4 2.2 18.4 3.4V12.4Q18.4 13.6 17.2 13.6H1.6Q0.4 13.6 0.4 12.4Z" fill="#a6a6a6"/></svg>
<span class="t" style="left:357.60px;top:904.54px;font-size:12px;color:#c0c0c0;letter-spacing:0.126px;">dev</span>
<span class="t" style="left:789.20px;top:904.54px;font-size:12px;color:#c4c4c4;letter-spacing:0.388px;">01/26/2026 03:3</span>
<svg class="b" style="left:318px;top:925px;" width="10" height="10" viewBox="0 0 10 10"><rect x="0" y="0" width="10" height="10" rx="1.6" fill="#b2b2b2"/><rect x="1.8" y="4.1" width="6.4" height="1.8" fill="#1f2124"/><rect x="4.1" y="1.8" width="1.8" height="6.4" fill="#1f2124"/></svg>
<svg class="b" style="left:333.6px;top:922px;" width="19" height="14" viewBox="0 0 19 14"><path d="M0.4 1.6Q0.4 0.4 1.6 0.4H6.6L8.4 2.2H17.2Q18.4 2.2 18.4 3.4V12.4Q18.4 13.6 17.2 13.6H1.6Q0.4 13.6 0.4 12.4Z" fill="#a6a6a6"/></svg>
<span class="t" style="left:357.60px;top:924.54px;font-size:12px;color:#c0c0c0;letter-spacing:0.396px;">etc</span>
<span class="t" style="left:789.20px;top:924.54px;font-size:12px;color:#c4c4c4;letter-spacing:0.388px;">01/26/2026 09:0</span>
<svg class="b" style="left:318px;top:945px;" width="10" height="10" viewBox="0 0 10 10"><rect x="0" y="0" width="10" height="10" rx="1.6" fill="#b2b2b2"/><rect x="1.8" y="4.1" width="6.4" height="1.8" fill="#1f2124"/><rect x="4.1" y="1.8" width="1.8" height="6.4" fill="#1f2124"/></svg>
<svg class="b" style="left:333.6px;top:942px;" width="19" height="14" viewBox="0 0 19 14"><path d="M0.4 1.6Q0.4 0.4 1.6 0.4H6.6L8.4 2.2H17.2Q18.4 2.2 18.4 3.4V12.4Q18.4 13.6 17.2 13.6H1.6Q0.4 13.6 0.4 12.4Z" fill="#a6a6a6"/></svg>
<span class="t" style="left:357.60px;top:944.54px;font-size:12px;color:#c0c0c0;letter-spacing:0.485px;">home</span>
<span class="t" style="left:789.20px;top:944.54px;font-size:12px;color:#c4c4c4;letter-spacing:0.451px;">11/25/2025 09:2</span>
<svg class="b" style="left:318px;top:965px;" width="10" height="10" viewBox="0 0 10 10"><rect x="0" y="0" width="10" height="10" rx="1.6" fill="#b2b2b2"/><rect x="1.8" y="4.1" width="6.4" height="1.8" fill="#1f2124"/><rect x="4.1" y="1.8" width="1.8" height="6.4" fill="#1f2124"/></svg>
<svg class="b" style="left:333.6px;top:962px;" width="19" height="14" viewBox="0 0 19 14"><path d="M0.4 1.6Q0.4 0.4 1.6 0.4H6.6L8.4 2.2H17.2Q18.4 2.2 18.4 3.4V12.4Q18.4 13.6 17.2 13.6H1.6Q0.4 13.6 0.4 12.4Z" fill="#a6a6a6"/></svg>
<span class="t" style="left:357.60px;top:964.54px;font-size:12px;color:#c0c0c0;letter-spacing:-0.091px;">lib</span>
<span class="t" style="left:789.20px;top:964.54px;font-size:12px;color:#c4c4c4;letter-spacing:0.388px;">01/26/2026 09:0</span>
<svg class="b" style="left:318px;top:985px;" width="10" height="10" viewBox="0 0 10 10"><rect x="0" y="0" width="10" height="10" rx="1.6" fill="#b2b2b2"/><rect x="1.8" y="4.1" width="6.4" height="1.8" fill="#1f2124"/><rect x="4.1" y="1.8" width="1.8" height="6.4" fill="#1f2124"/></svg>
<svg class="b" style="left:333.6px;top:982px;" width="19" height="14" viewBox="0 0 19 14"><path d="M0.4 1.6Q0.4 0.4 1.6 0.4H6.6L8.4 2.2H17.2Q18.4 2.2 18.4 3.4V12.4Q18.4 13.6 17.2 13.6H1.6Q0.4 13.6 0.4 12.4Z" fill="#a6a6a6"/></svg>
<span class="t" style="left:357.60px;top:984.54px;font-size:12px;color:#c0c0c0;letter-spacing:0.030px;">lib32</span>
<span class="t" style="left:789.20px;top:984.54px;font-size:12px;color:#c4c4c4;letter-spacing:0.388px;">01/26/2026 09:0</span>
<svg class="b" style="left:318px;top:1005px;" width="10" height="10" viewBox="0 0 10 10"><rect x="0" y="0" width="10" height="10" rx="1.6" fill="#b2b2b2"/><rect x="1.8" y="4.1" width="6.4" height="1.8" fill="#1f2124"/><rect x="4.1" y="1.8" width="1.8" height="6.4" fill="#1f2124"/></svg>
<svg class="b" style="left:333.6px;top:1002px;" width="19" height="14" viewBox="0 0 19 14"><path d="M0.4 1.6Q0.4 0.4 1.6 0.4H6.6L8.4 2.2H17.2Q18.4 2.2 18.4 3.4V12.4Q18.4 13.6 17.2 13.6H1.6Q0.4 13.6 0.4 12.4Z" fill="#a6a6a6"/></svg>
<span class="t" style="left:357.60px;top:1004.54px;font-size:12px;color:#c0c0c0;letter-spacing:0.130px;">lib64</span>
<span class="t" style="left:789.20px;top:1004.54px;font-size:12px;color:#c4c4c4;letter-spacing:0.388px;">01/26/2026 09:0</span>
<svg class="b" style="left:318px;top:1025px;" width="10" height="10" viewBox="0 0 10 10"><rect x="0" y="0" width="10" height="10" rx="1.6" fill="#b2b2b2"/><rect x="1.8" y="4.1" width="6.4" height="1.8" fill="#1f2124"/><rect x="4.1" y="1.8" width="1.8" height="6.4" fill="#1f2124"/></svg>
<svg class="b" style="left:333.6px;top:1022px;" width="19" height="14" viewBox="0 0 19 14"><path d="M0.4 1.6Q0.4 0.4 1.6 0.4H6.6L8.4 2.2H17.2Q18.4 2.2 18.4 3.4V12.4Q18.4 13.6 17.2 13.6H1.6Q0.4 13.6 0.4 12.4Z" fill="#a6a6a6"/></svg>
<span class="t" style="left:357.60px;top:1024.54px;font-size:12px;color:#c0c0c0;letter-spacing:0.204px;">libx32</span>
<div class="b" style="left:763px;top:1020px;width:178px;height:20px;background:#454545;border-radius:3px"></div>
<div class="b" style="left:772px;top:1023px;width:144px;height:16px;background:#242628;border-radius:5px"></div>
<div class="b" style="left:774px;top:1025px;width:23.4px;height:12px;background:#a2a2a2;border-radius:5px"></div>
<svg class="b" style="left:919px;top:1023px;" width="17" height="14" viewBox="0 0 17 14"><rect x="0" y="0" width="7.5" height="6.4" fill="#8e8e8e"/><rect x="8.7" y="0" width="7.5" height="6.4" fill="#8e8e8e"/><rect x="0" y="7.6" width="7.5" height="6.4" fill="#8e8e8e"/><rect x="8.7" y="7.6" width="7.5" height="6.4" fill="#8e8e8e"/></svg>
<div class="b" style="left:959px;top:816px;width:378px;height:226px;background:#1f2124;"></div>
<div class="b" style="left:963px;top:817px;width:358px;height:102px;background:#343434;border-radius:3px"></div>
<div class="b" style="left:963px;top:922px;width:358px;height:54px;background:#343434;border-radius:3px"></div>
<div class="b" style="left:963px;top:979px;width:358px;height:63px;background:#343434;border-radius:3px 3px 0 0"></div>
<div class="b" style="left:1328px;top:819px;width:6px;height:135px;background:#a0a0a0;border-radius:3px"></div>
<svg class="b" style="left:971.8px;top:828.6px;" width="9" height="5" viewBox="0 0 9 5"><path d="M0.2 0.2H8.4L4.3 4.6Z" fill="#c8c8c8"/></svg>
<div class="b" style="left:966px;top:846px;width:352px;height:2px;background:#4a4a4a;"></div>
<span class="t" style="left:966.70px;top:852.94px;font-size:12px;color:#bdbdbd;letter-spacing:0.515px;">Date Modified</span>
<span class="t" style="left:966.70px;top:869.04px;font-size:12px;color:#bdbdbd;letter-spacing:0.289px;">Created by</span>
<span class="t" style="left:966.70px;top:885.24px;font-size:12px;color:#bdbdbd;letter-spacing:0.318px;">Modified by</span>
<span class="t" style="left:966.70px;top:901.14px;font-size:12px;color:#bdbdbd;transform:scaleX(0.9631);transform-origin:0 0;">File size</span>
<span class="t" style="left:1200.00px;top:852.94px;font-size:12px;color:#bdbdbd;letter-spacing:0.369px;">07/21/2025 02:40PM</span>
<span class="t" style="left:1275.00px;top:901.14px;font-size:12px;color:#bdbdbd;">4.00 KB</span>
<svg class="b" style="left:971.8px;top:933.6px;" width="9" height="5" viewBox="0 0 9 5"><path d="M0.2 0.2H8.4L4.3 4.6Z" fill="#c8c8c8"/></svg>
<span class="t" style="left:986.30px;top:929.84px;font-size:12px;color:#d6d6d6;letter-spacing:0.532px;">File Information</span>
<div class="b" style="left:966px;top:951px;width:352px;height:2px;background:#4a4a4a;"></div>
<span class="t" style="left:966.70px;top:957.84px;font-size:12px;color:#bdbdbd;letter-spacing:0.572px;">No Additional Information</span>
<svg class="b" style="left:971.8px;top:990.6px;" width="9" height="5" viewBox="0 0 9 5"><path d="M0.2 0.2H8.4L4.3 4.6Z" fill="#c8c8c8"/></svg>
<span class="t" style="left:986.30px;top:986.84px;font-size:12px;color:#d6d6d6;letter-spacing:0.506px;">Checkpoints</span>
<svg class="b" style="left:1112px;top:1033px;" width="58" height="9" viewBox="0 0 58 9"><path d="M0 5L48.8 1.1L49.8 9H0Z" fill="#939393"/><path d="M48.8 1.1L57.4 9H49.7Z" fill="#d2d2d2"/></svg>
</div>
</body></html>
